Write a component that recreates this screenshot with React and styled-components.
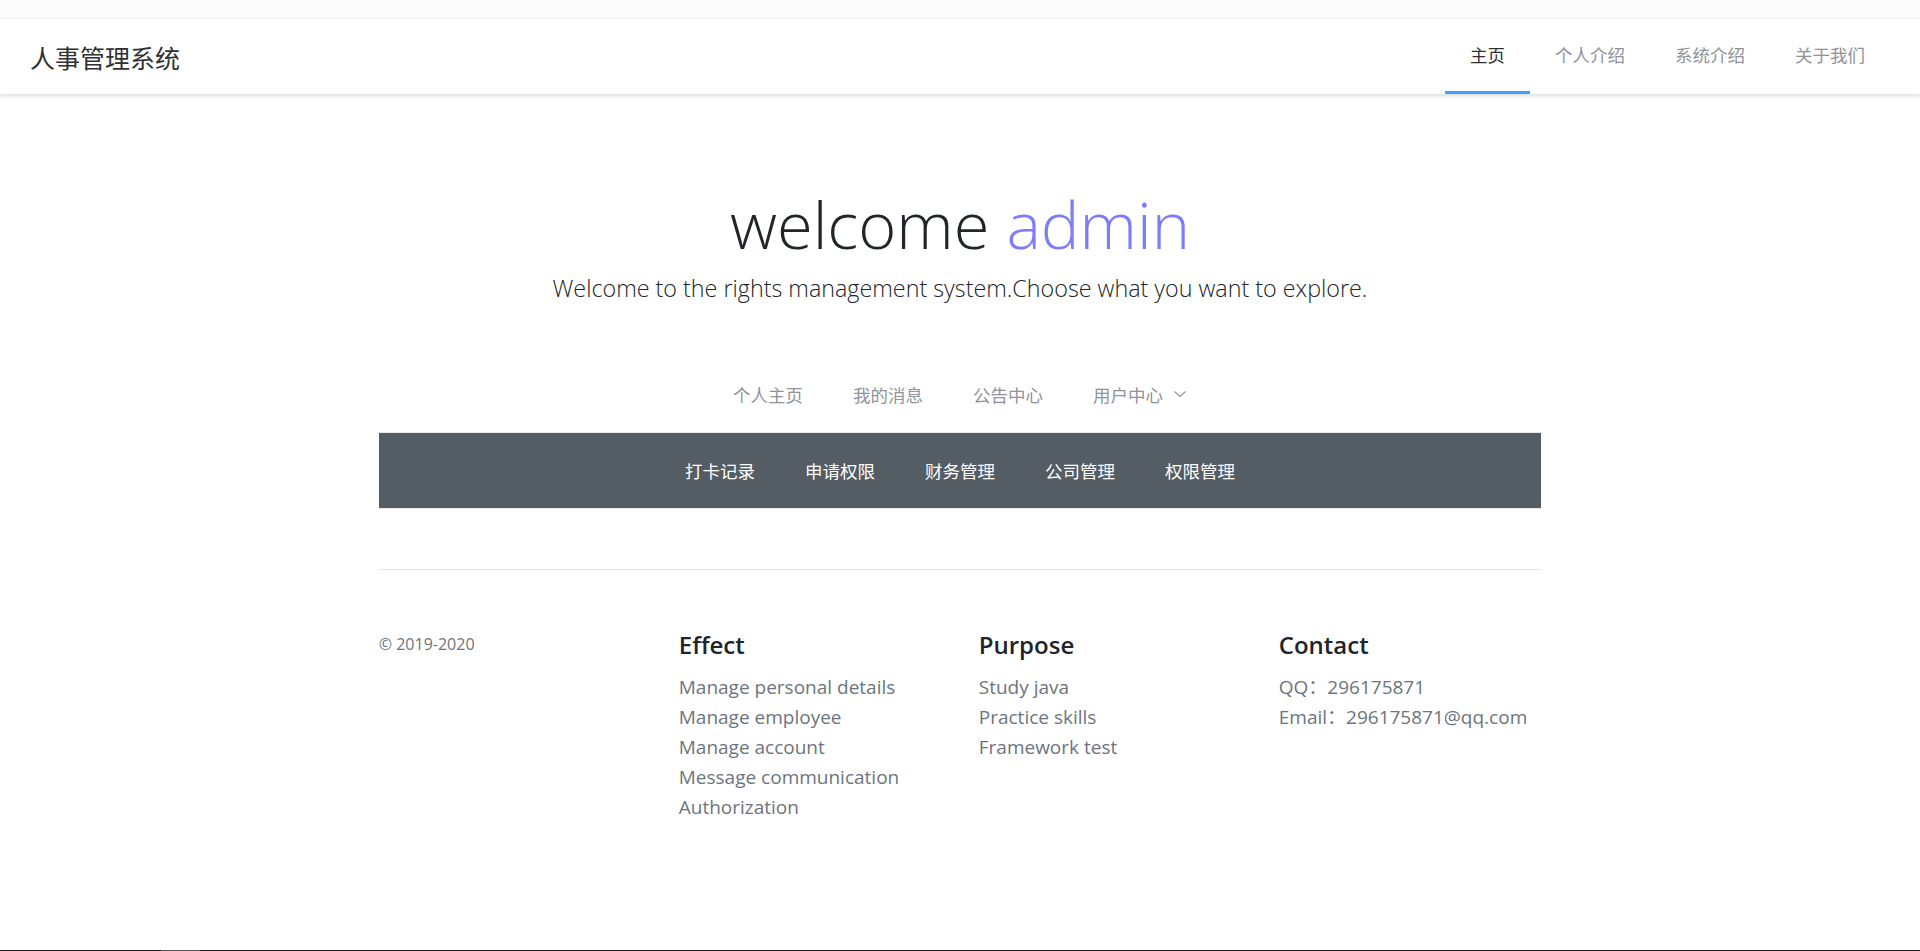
import React from "react";
import styled, { createGlobalStyle } from "styled-components";

const GlobalStyle = createGlobalStyle`
  html, body {
    margin: 0;
    padding: 0;
    background: #ffffff;
  }
  body {
    font-family: "Open Sans", "Noto Sans CJK SC", sans-serif;
    color: #212529;
  }
  * { box-sizing: border-box; }
`;

const Page = styled.div`
  min-height: 100vh;
  display: flex;
  flex-direction: column;
`;

const TopStrip = styled.div`
  height: 19px;
  background: #fbfbfb;
`;

const Header = styled.header`
  height: 75px;
  display: flex;
  align-items: center;
  justify-content: space-between;
  padding: 0 30px;
  background: #fff;
  box-shadow: 0 2px 4px rgba(0, 0, 0, 0.12), 0 0 6px rgba(0, 0, 0, 0.04);
  position: relative;
  z-index: 1;
`;

const Brand = styled.div`
  font-family: "Noto Sans CJK SC", sans-serif;
  font-size: 25px;
  color: #303133;
`;

const TopNav = styled.nav`
  display: flex;
  height: 100%;
`;

const TopNavItem = styled.div`
  height: 75px;
  line-height: 72px;
  padding: 0 25px;
  font-family: "Noto Sans CJK SC", sans-serif;
  font-size: 17.5px;
  color: ${(p) => (p.$active ? "#303133" : "#909399")};
  border-bottom: 3px solid ${(p) => (p.$active ? "#409eff" : "transparent")};
  cursor: pointer;
`;

const Container = styled.main`
  width: 1162.5px;
  margin: 0 auto;
`;

const Hero = styled.section`
  text-align: center;
  padding-top: 88px;
`;

const Title = styled.h1`
  margin: 0;
  font-family: "Open Sans", sans-serif;
  font-weight: 300;
  font-size: 65px;
  line-height: 84px;
  color: #212529;
`;

const Accent = styled.span`
  color: #7d7cf9;
`;

const Lead = styled.p`
  margin: 4px 0 0;
  font-family: "Open Sans", sans-serif;
  font-weight: 300;
  font-size: 23.3px;
  line-height: 37.5px;
  color: #212529;
`;

const LightMenu = styled.nav`
  margin-top: 49px;
  display: flex;
  justify-content: center;
  border-bottom: 1px solid #e6e6e6;
`;

const LightItem = styled.div`
  height: 75px;
  line-height: 75px;
  padding: 0 25px;
  display: flex;
  align-items: center;
  font-family: "Noto Sans CJK SC", sans-serif;
  font-size: 17.5px;
  color: #909399;
  cursor: pointer;
`;

const Arrow = styled.svg`
  margin-left: 10px;
  width: 14px;
  height: 14px;
`;

const DarkMenu = styled.nav`
  display: flex;
  justify-content: center;
  background: #545c64;
  border-bottom: 1px solid #e6e6e6;
`;

const DarkItem = styled.div`
  height: 75px;
  line-height: 75px;
  padding: 0 25px;
  font-family: "Noto Sans CJK SC", sans-serif;
  font-size: 17.5px;
  color: #ffffff;
  cursor: pointer;
`;

const Footer = styled.footer`
  margin-top: 60px;
  padding-top: 62px;
  border-top: 1px solid #e5e5e5;
  display: grid;
  grid-template-columns: repeat(4, 1fr);
  column-gap: 37.5px;
`;

const Copyright = styled.small`
  display: block;
  font-size: 16px;
  line-height: 24px;
  color: #6c757d;
`;

const Column = styled.div`
  display: flex;
  flex-direction: column;
`;

const ColTitle = styled.h5`
  margin: -2px 0 12px;
  font-size: 24px;
  line-height: 30px;
  font-weight: 600;
  color: #212529;
`;

const ColList = styled.ul`
  list-style: none;
  margin: 0;
  padding: 0;
`;

const ColItem = styled.li`
  font-size: 19px;
  line-height: 30px;
  color: #6c757d;
`;

const Spacer = styled.div`
  flex: 1;
`;

const ScrollEdge = styled.div`
  height: 1px;
  background: #1f1f1f;
  display: flex;
`;

const ScrollThumb = styled.div`
  margin-left: 161px;
  width: 39px;
  background: #555;
`;

const topNav = ["主页", "个人介绍", "系统介绍", "关于我们"];
const lightNav = ["个人主页", "我的消息", "公告中心"];
const darkNav = ["打卡记录", "申请权限", "财务管理", "公司管理", "权限管理"];

const columns = [
  {
    title: "Effect",
    items: [
      "Manage personal details",
      "Manage employee",
      "Manage account",
      "Message communication",
      "Authorization",
    ],
  },
  {
    title: "Purpose",
    items: ["Study java", "Practice skills", "Framework test"],
  },
  {
    title: "Contact",
    items: ["QQ：296175871", "Email：296175871@qq.com"],
  },
];

export default function App() {
  return (
    <Page>
      <GlobalStyle />
      <TopStrip />
      <Header>
        <Brand>人事管理系统</Brand>
        <TopNav>
          {topNav.map((t, i) => (
            <TopNavItem key={t} $active={i === 0}>
              {t}
            </TopNavItem>
          ))}
        </TopNav>
      </Header>
      <Container>
        <Hero>
          <Title>
            welcome <Accent>admin</Accent>
          </Title>
          <Lead>Welcome to the rights management system.Choose what you want to explore.</Lead>
        </Hero>
        <LightMenu>
          {lightNav.map((t) => (
            <LightItem key={t}>{t}</LightItem>
          ))}
          <LightItem>
            用户中心
            <Arrow viewBox="0 0 14 14" fill="none">
              <path d="M1.5 4.5 L7 9.5 L12.5 4.5" stroke="#909399" strokeWidth="1.1" />
            </Arrow>
          </LightItem>
        </LightMenu>
        <DarkMenu>
          {darkNav.map((t) => (
            <DarkItem key={t}>{t}</DarkItem>
          ))}
        </DarkMenu>
        <Footer>
          <Column>
            <Copyright>© 2019-2020</Copyright>
          </Column>
          {columns.map((c) => (
            <Column key={c.title}>
              <ColTitle>{c.title}</ColTitle>
              <ColList>
                {c.items.map((it) => (
                  <ColItem key={it}>{it}</ColItem>
                ))}
              </ColList>
            </Column>
          ))}
        </Footer>
      </Container>
      <Spacer />
      <ScrollEdge>
        <ScrollThumb />
      </ScrollEdge>
    </Page>
  );
}
